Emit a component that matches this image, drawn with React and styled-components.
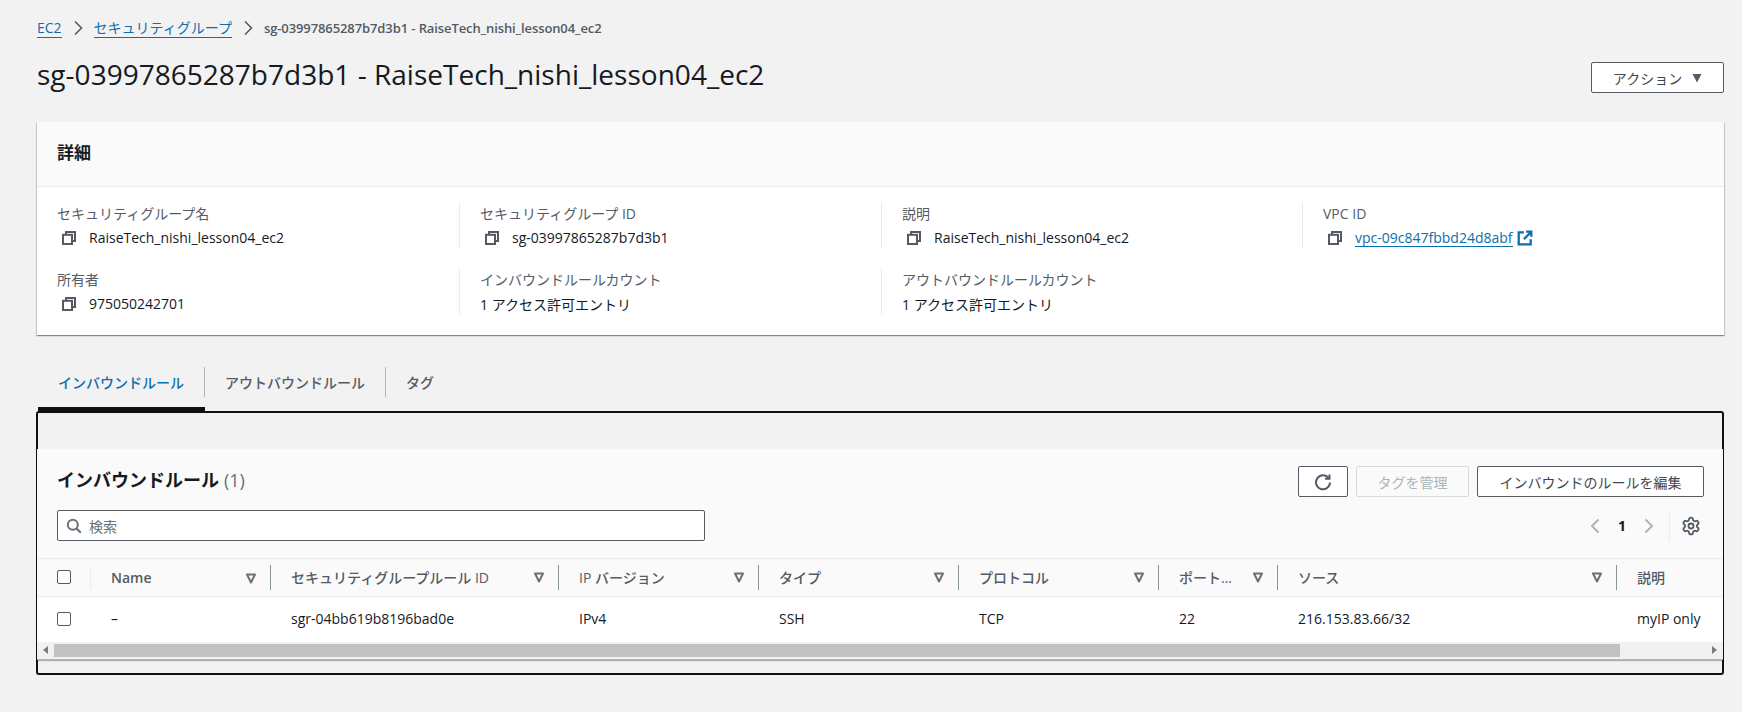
import React from "react";
import styled, { createGlobalStyle } from "styled-components";
import { Settings } from "lucide-react";

const FONT = `"Open Sans", "Noto Sans CJK JP", sans-serif`;
const COLUMNS = "54px 180px 288px 200px 200px 200px 119px 339px 1fr";
const LINK = "#0b6fae";

const GlobalStyle = createGlobalStyle`
  html, body {
    margin: 0;
    background: #f2f2f2;
    font-family: ${FONT};
    font-size: 14px;
    color: #16191f;
  }
  * { box-sizing: border-box; }
`;

const Page = styled.div`
  width: 1742px;
  height: 712px;
  padding: 18px 18px 0 37px;
  overflow: hidden;
`;

const Breadcrumbs = styled.nav`
  display: flex;
  align-items: center;
  height: 20px;
  font-size: 14px;
  line-height: 20px;
`;

const Crumb = styled.a`
  color: ${LINK};
  border-bottom: 1px solid ${LINK};
  line-height: 18px;
`;

const CurrentCrumb = styled.span`
  color: #545b64;
  font-size: 13px;
  font-weight: 600;
  letter-spacing: -0.1px;
`;

const CrumbArrow = styled.svg`
  width: 12px;
  height: 16px;
  margin: 0 10px;
  fill: none;
  stroke: #545b64;
  stroke-width: 1.6;
`;

const HeaderRow = styled.header`
  display: flex;
  justify-content: space-between;
  align-items: flex-end;
  margin-top: 21px;
  height: 34px;
`;

const Title = styled.h1`
  margin: 0 0 3px;
  font-size: 28px;
  font-weight: 400;
  line-height: 32px;
  letter-spacing: 0.015px;
`;

const Button = styled.button`
  display: inline-flex;
  align-items: center;
  justify-content: center;
  gap: 10px;
  width: ${(p) => p.$width}px;
  height: 31px;
  padding: 0;
  font-family: ${FONT};
  font-size: 14px;
  color: ${(p) => (p.disabled ? "#aab7b8" : "#414750")};
  background: ${(p) => (p.disabled ? "#fafafa" : "#ffffff")};
  border: 1px solid ${(p) => (p.disabled ? "#d5dbdb" : "#545b64")};
  border-radius: 2px;
`;

const Card = styled.section`
  margin-top: 29px;
  height: 213px;
  background: #fff;
  box-shadow: 0 1px 1px 0 rgba(0, 28, 36, 0.3), 1px 1px 1px 0 rgba(0, 28, 36, 0.15),
    -1px 1px 1px 0 rgba(0, 28, 36, 0.15);
`;

const CardHead = styled.div`
  height: 65px;
  padding: 19px 20px;
  background: #fafafa;
  border-bottom: 1px solid #eaeded;
  font-size: 17px;
  font-weight: 700;
  line-height: 24px;
`;

const DetailGrid = styled.div`
  display: grid;
  grid-template-columns: 403px 422px 421px 1fr;
  row-gap: 19px;
  padding: 15px 20px;
`;

const DetailItem = styled.div`
  height: 47px;
  padding-left: ${(p) => (p.$first ? 0 : 20)}px;
  border-right: ${(p) => (p.$last ? "none" : "1px solid #eaeded")};
`;

const Label = styled.div`
  color: #545b64;
  font-size: 14px;
  line-height: 23px;
`;

const Value = styled.div`
  display: flex;
  align-items: center;
  height: 25px;
  font-size: 14px;
`;

const CopyGlyph = styled.svg`
  width: 14px;
  height: 14px;
  margin: 0 13px 0 5px;
  fill: none;
  stroke: #545b64;
  stroke-width: 2;
`;

const ValueLink = styled.a`
  color: ${LINK};
  border-bottom: 1px solid ${LINK};
  line-height: 17px;
`;

const ExternalGlyph = styled.svg`
  width: 16px;
  height: 16px;
  margin-left: 4px;
  fill: none;
  stroke: ${LINK};
  stroke-width: 2;
`;

const Tabs = styled.div`
  display: flex;
  align-items: center;
  height: 76px;
  padding-left: 1px;
  padding-top: 17px;
`;

const Tab = styled.div`
  position: relative;
  display: flex;
  align-items: center;
  height: 30px;
  padding: 0 20px;
  color: ${(p) => (p.$active ? LINK : "#545b64")};
  font-weight: 500;
  font-size: 14px;
  border-right: ${(p) => (p.$last ? "none" : "1px solid #aab7b8")};

  ${(p) =>
    p.$active &&
    `
    &::after {
      content: "";
      position: absolute;
      left: 0;
      right: -1px;
      bottom: -14px;
      height: 4px;
      background: #0f1111;
    }
  `}
`;

const TabPanel = styled.div`
  margin-left: -1px;
  height: 264px;
  padding-top: 36px;
  border: 2px solid #0f1111;
  border-radius: 3px;
`;

const TableCard = styled.section`
  margin: 0 -1px;
  height: 211px;
  background: #fff;
  box-shadow: 0 1px 1px 0 rgba(0, 28, 36, 0.3);
`;

const TableHeader = styled.div`
  display: grid;
  grid-template-columns: 1fr auto;
  height: 109px;
  padding: 17px 19px 17px 20px;
  row-gap: 13px;
  background: #fafafa;
`;

const TableTitle = styled.h2`
  margin: 0;
  height: 31px;
  font-size: 18px;
  font-weight: 700;
  line-height: 28px;

  span {
    margin-left: 5px;
    color: #687078;
    font-weight: 400;
  }
`;

const Actions = styled.div`
  display: flex;
  gap: 8px;
`;

const Search = styled.div`
  display: flex;
  align-items: center;
  width: 648px;
  height: 31px;
  padding-left: 8px;
  gap: 7px;
  color: #687078;
  background: #fff;
  border: 1px solid #545b64;
  border-radius: 2px;
`;

const SearchGlyph = styled.svg`
  width: 16px;
  height: 16px;
  fill: none;
  stroke: #687078;
  stroke-width: 2;
`;

const Pager = styled.div`
  display: flex;
  align-items: center;
  justify-content: flex-end;
  height: 31px;
  padding-right: 3px;
  color: #545b64;
`;

const PagerArrow = styled.svg`
  width: 12px;
  height: 16px;
  fill: none;
  stroke: #aab7b8;
  stroke-width: 2;
`;

const PageNumber = styled.span`
  width: 42px;
  text-align: center;
  font-size: 14px;
  font-weight: 700;
  color: #16191f;
`;

const PrefsDivider = styled.div`
  height: 31px;
  margin: 0 11px 0 14px;
  border-left: 1px solid #eaeded;
`;

const HeadRow = styled.div`
  display: grid;
  grid-template-columns: ${COLUMNS};
  height: 39px;
  background: #fafafa;
  border-top: 1px solid #eaeded;
  border-bottom: 1px solid #eaeded;
`;

const BodyRow = styled.div`
  display: grid;
  grid-template-columns: ${COLUMNS};
  height: 45px;
  background: #fff;
`;

const CheckCell = styled.div`
  display: flex;
  align-items: center;
  padding-left: 20px;
  padding-bottom: 1px;
`;

const CheckHeadCell = styled(CheckCell)`
  position: relative;

  &::after {
    content: "";
    position: absolute;
    right: 0;
    top: 7px;
    bottom: 7px;
    border-right: 1px solid #eaeded;
  }
`;

const Checkbox = styled.span`
  display: block;
  width: 14px;
  height: 14px;
  border: 1px solid #545b64;
  border-radius: 2px;
  background: #fff;
`;

const HeadCell = styled.div`
  position: relative;
  display: flex;
  align-items: center;
  justify-content: space-between;
  padding: 0 14px ${(p) => (p.$latin ? 0 : 2)}px 20px;
  color: #545b64;
  font-size: 14px;
  font-weight: ${(p) => (p.$latin ? 600 : 500)};

  &::after {
    content: "";
    display: ${(p) => (p.$last ? "none" : "block")};
    position: absolute;
    right: 0;
    top: 6px;
    bottom: 6px;
    border-right: 1px solid #879596;
  }
`;

const SortGlyph = styled.svg`
  width: 12px;
  height: 12px;
  fill: none;
  stroke: #687078;
  stroke-width: 2;
`;

const Cell = styled.div`
  display: flex;
  align-items: center;
  padding: 0 0 2px 20px;
  font-size: 14px;
  color: #16191f;
  white-space: nowrap;
`;

const ScrollBar = styled.div`
  display: flex;
  align-items: center;
  height: 18px;
  padding: 2px 0 3px;
  background: #f1f1f1;
  border-bottom: 1px solid #aab7b8;
`;

const ScrollArrow = styled.span`
  flex: none;
  width: 17px;
  height: 13px;
  display: flex;
  align-items: center;
  justify-content: center;

  svg {
    width: 5px;
    height: 8px;
    fill: #7d7d7d;
  }
`;

const ScrollThumb = styled.div`
  flex: none;
  height: 13px;
  background: #c1c1c1;
`;

const ScrollGap = styled.div`
  flex: 1;
`;

const Chevron = () => (
  <CrumbArrow viewBox="0 0 12 16">
    <path d="M3 1.5 9.5 8 3 14.5" />
  </CrumbArrow>
);

const CopyIcon = () => (
  <CopyGlyph viewBox="0 0 14 14">
    <path d="M4 3.5V1h9v9h-2.5" />
    <rect x="1" y="3.8" width="9" height="9.2" />
  </CopyGlyph>
);

const SortIcon = () => (
  <SortGlyph viewBox="0 0 12 12">
    <path d="M2 2.5h8L6 10.5z" strokeLinejoin="round" />
  </SortGlyph>
);

const details = [
  ["セキュリティグループ名", "RaiseTech_nishi_lesson04_ec2", true],
  ["セキュリティグループ ID", "sg-03997865287b7d3b1", true],
  ["説明", "RaiseTech_nishi_lesson04_ec2", true],
  ["VPC ID", "vpc-09c847fbbd24d8abf", true, true],
  ["所有者", "975050242701", true],
  ["インバウンドルールカウント", "1 アクセス許可エントリ"],
  ["アウトバウンドルールカウント", "1 アクセス許可エントリ"],
];

const columns = [
  "Name",
  "セキュリティグループルール ID",
  "IP バージョン",
  "タイプ",
  "プロトコル",
  "ポート…",
  "ソース",
  "説明",
];

const row = ["–", "sgr-04bb619b8196bad0e", "IPv4", "SSH", "TCP", "22", "216.153.83.66/32", "myIP only"];

const App = () => {
  return (
    <Page>
      <GlobalStyle />
      <Breadcrumbs>
        <Crumb>EC2</Crumb>
        <Chevron />
        <Crumb>セキュリティグループ</Crumb>
        <Chevron />
        <CurrentCrumb>sg-03997865287b7d3b1 - RaiseTech_nishi_lesson04_ec2</CurrentCrumb>
      </Breadcrumbs>

      <HeaderRow>
        <Title>sg-03997865287b7d3b1 - RaiseTech_nishi_lesson04_ec2</Title>
        <Button $width={133}>
          アクション
          <svg width="10" height="10" viewBox="0 0 10 10">
            <path d="M0.5 1h9L5 9.5z" fill="#545b64" />
          </svg>
        </Button>
      </HeaderRow>

      <Card>
        <CardHead>詳細</CardHead>
        <DetailGrid>
          {details.map(([label, value, copy, link], i) => (
            <DetailItem key={label} $first={i % 4 === 0} $last={i === 3 || i === 6}>
              <Label>{label}</Label>
              <Value>
                {copy && <CopyIcon />}
                {link ? <ValueLink>{value}</ValueLink> : value}
                {link && (
                  <ExternalGlyph viewBox="0 0 14 14">
                    <path d="M6 2H1.5v10.5H12V8M8 1.5h4.5V6M12.5 1.5 6 8" />
                  </ExternalGlyph>
                )}
              </Value>
            </DetailItem>
          ))}
        </DetailGrid>
      </Card>

      <Tabs>
        <Tab $active>インバウンドルール</Tab>
        <Tab>アウトバウンドルール</Tab>
        <Tab $last>タグ</Tab>
      </Tabs>

      <TabPanel>
        <TableCard>
          <TableHeader>
            <TableTitle>
              インバウンドルール<span>(1)</span>
            </TableTitle>
            <Actions>
              <Button $width={50}>
                <svg width="18" height="18" viewBox="0 0 18 18" fill="none" stroke="#545b64" strokeWidth="2">
                  <path d="M14.5 5A7 7 0 1 0 16 9.5" />
                  <path d="M15.5 1.5V5.8H11" />
                </svg>
              </Button>
              <Button $width={113} disabled>
                タグを管理
              </Button>
              <Button $width={227}>インバウンドのルールを編集</Button>
            </Actions>
            <Search>
              <SearchGlyph viewBox="0 0 16 16">
                <circle cx="6.8" cy="6.8" r="5" />
                <path d="m10.5 10.5 4.3 4.3" />
              </SearchGlyph>
              検索
            </Search>
            <Pager>
              <PagerArrow viewBox="0 0 12 16">
                <path d="M9.5 1.5 3 8l6.5 6.5" />
              </PagerArrow>
              <PageNumber>1</PageNumber>
              <PagerArrow viewBox="0 0 12 16">
                <path d="M2.5 1.5 9 8l-6.5 6.5" />
              </PagerArrow>
              <PrefsDivider />
              <Settings size={20} strokeWidth={2.2} />
            </Pager>
          </TableHeader>

          <HeadRow>
            <CheckHeadCell>
              <Checkbox />
            </CheckHeadCell>
            {columns.map((name, i) => (
              <HeadCell key={name} $latin={name === "Name"} $last={i === columns.length - 1}>
                {name}
                {i < columns.length - 1 && <SortIcon />}
              </HeadCell>
            ))}
          </HeadRow>
          <BodyRow>
            <CheckCell>
              <Checkbox />
            </CheckCell>
            {row.map((value, i) => (
              <Cell key={i}>{value}</Cell>
            ))}
          </BodyRow>
          <ScrollBar>
            <ScrollArrow>
              <svg viewBox="0 0 5 8">
                <path d="M5 0v8L0 4z" />
              </svg>
            </ScrollArrow>
            <ScrollThumb style={{ width: 1566 }} />
            <ScrollGap />
            <ScrollArrow>
              <svg viewBox="0 0 5 8">
                <path d="M0 0v8l5-4z" />
              </svg>
            </ScrollArrow>
          </ScrollBar>
        </TableCard>
      </TabPanel>
    </Page>
  );
};

export default App;
